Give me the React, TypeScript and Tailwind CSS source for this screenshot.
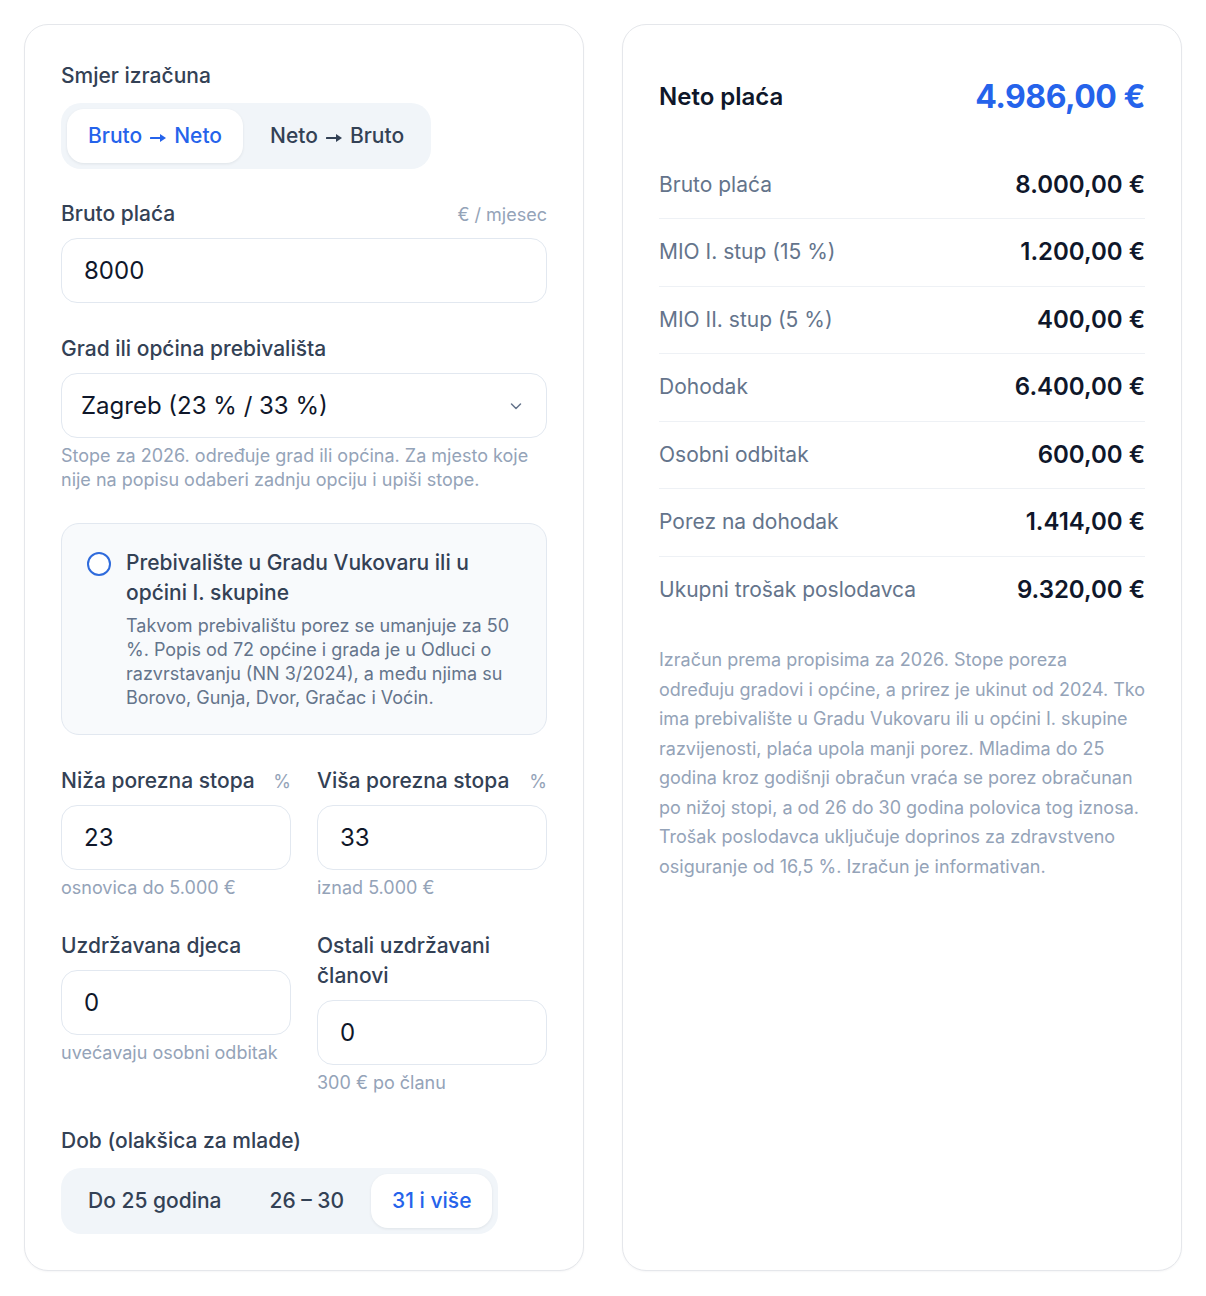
import React from "react";

const Arrow = () => (
  <svg className="mx-[8px] inline-block align-middle" width="16" height="10" viewBox="0 0 16 10" fill="currentColor">
    <rect x="0" y="4.1" width="11" height="1.8" rx="0.5" />
    <path d="M10 1l6 4-6 4z" />
  </svg>
);

const Segmented = ({ options, active }: { options: React.ReactNode[]; active: number }) => {
  return (
    <div className="inline-flex gap-[6px] self-start rounded-[20px] bg-[#f1f5f9] p-[6px]">
      {options.map((o, i) => (
        <button
          key={i}
          className={
            i === active
              ? "h-[54px] rounded-[17px] bg-white px-[21px] text-[21px] font-medium text-[#2563eb] shadow-[0_1px_3px_rgba(15,23,42,0.08)]"
              : "h-[54px] rounded-[17px] px-[21px] text-[21px] font-medium text-[#334155]"
          }
        >
          {o}
        </button>
      ))}
    </div>
  );
};

const Field = ({
  label,
  unit,
  value,
  hint,
}: {
  label: string;
  unit?: string;
  value: string;
  hint?: string;
}) => {
  return (
    <div className="flex flex-col">
      <div className="mb-[9px] flex items-baseline justify-between gap-3">
        <span className="text-[21px] font-medium leading-[30px] text-[#334155]">{label}</span>
        {unit && <span className="text-[18px] text-[#94a3b8]">{unit}</span>}
      </div>
      <input
        className="h-[65px] w-full rounded-[16px] border border-[#e2e8f0] bg-white px-[22px] text-[24px] text-[#0f172a] outline-none"
        defaultValue={value}
      />
      {hint && <p className="mt-[6px] text-[18px] leading-[24px] text-[#94a3b8]">{hint}</p>}
    </div>
  );
};

const rows = [
  ["Bruto plaća", "8.000,00 €"],
  ["MIO I. stup (15 %)", "1.200,00 €"],
  ["MIO II. stup (5 %)", "400,00 €"],
  ["Dohodak", "6.400,00 €"],
  ["Osobni odbitak", "600,00 €"],
  ["Porez na dohodak", "1.414,00 €"],
  ["Ukupni trošak poslodavca", "9.320,00 €"],
];

export default function App() {
  return (
    <div className="min-h-screen bg-white p-6 font-['Inter',sans-serif]">
      <div className="grid grid-cols-2 gap-[38px]">
        {/* left: inputs */}
        <div className="flex flex-col gap-[31px] rounded-[24px] border border-[#e5e7eb] bg-white p-9 shadow-[0_1px_2px_rgba(15,23,42,0.04)]">
          <div className="-mb-px flex flex-col">
            <span className="mb-3 text-[21px] font-medium leading-[30px] text-[#334155]">Smjer izračuna</span>
            <Segmented
              options={[
                <>
                  Bruto<Arrow />Neto
                </>,
                <>
                  Neto<Arrow />Bruto
                </>,
              ]}
              active={0}
            />
          </div>

          <Field label="Bruto plaća" unit="€ / mjesec" value="8000" />

          <div className="flex flex-col">
            <span className="mb-[9px] text-[21px] font-medium leading-[30px] text-[#334155]">
              Grad ili općina prebivališta
            </span>
            <div className="relative">
              <select className="h-[65px] w-full appearance-none rounded-[16px] border border-[#e2e8f0] bg-white pl-[19px] pr-12 text-[24px] text-[#0f172a] outline-none">
                <option>Zagreb (23 % / 33 %)</option>
              </select>
              <svg
                className="pointer-events-none absolute right-[24px] top-1/2 -translate-y-1/2"
                width="14"
                height="14"
                viewBox="0 0 14 14"
                fill="none"
                stroke="#64748b"
                strokeWidth="1.5"
                strokeLinecap="round"
                strokeLinejoin="round"
              >
                <path d="M2.5 5l4.5 4.5 4.5-4.5" />
              </svg>
            </div>
            <p className="mt-[6px] text-[18px] leading-[24px] text-[#94a3b8]">
              Stope za 2026. određuje grad ili općina. Za mjesto koje nije na popisu odaberi zadnju opciju i upiši stope.
            </p>
          </div>

          <label className="flex gap-[15px] rounded-[18px] border border-[#e2e8f0] bg-[#f8fafc] py-6 pl-[25px] pr-6">
            <span className="mt-[4px] h-6 w-6 shrink-0 rounded-full border-2 border-[#2f6bdc] bg-white" />
            <span className="flex flex-col">
              <span className="text-[21px] font-medium leading-[30px] text-[#334155]">
                Prebivalište u Gradu Vukovaru ili u općini I. skupine
              </span>
              <span className="mt-[6px] text-[18px] leading-[24px] text-[#64748b]">
                Takvom prebivalištu porez se umanjuje za 50 %. Popis od 72 općine i grada je u Odluci o razvrstavanju (NN
                3/2024), a među njima su Borovo, Gunja, Dvor, Gračac i Voćin.
              </span>
            </span>
          </label>

          <div className="grid grid-cols-2 items-start gap-x-[26px] gap-y-[31px]">
            <Field label="Niža porezna stopa" unit="%" value="23" hint="osnovica do 5.000 €" />
            <Field label="Viša porezna stopa" unit="%" value="33" hint="iznad 5.000 €" />
            <Field label="Uzdržavana djeca" value="0" hint="uvećavaju osobni odbitak" />
            <Field label="Ostali uzdržavani članovi" value="0" hint="300 € po članu" />
          </div>

          <div className="flex flex-col">
            <span className="mb-3 text-[21px] font-medium leading-[30px] text-[#334155]">Dob (olakšica za mlade)</span>
            <Segmented options={["Do 25 godina", "26 – 30", "31 i više"]} active={2} />
          </div>
        </div>

        {/* right: result */}
        <div className="flex flex-col rounded-[24px] border border-[#e5e7eb] bg-white p-9 shadow-[0_1px_2px_rgba(15,23,42,0.04)]">
          <div className="flex items-center justify-between py-4">
            <span className="text-[24px] font-semibold text-[#0f172a]">Neto plaća</span>
            <span className="text-[32px] font-bold leading-[40px] tracking-[-0.015em] text-[#2563eb]">4.986,00 €</span>
          </div>
          <div className="mt-[18.5px] flex flex-col">
            {rows.map(([k, v], i) => (
              <div
                key={k}
                className={
                  "flex items-center justify-between py-[18px] " +
                  (i < rows.length - 1 ? "border-b border-[#eef1f5]" : "")
                }
              >
                <span className="text-[21px] leading-[30.5px] text-[#64748b]">{k}</span>
                <span className="text-[24px] font-semibold leading-[30.5px] text-[#0f172a]">{v}</span>
              </div>
            ))}
          </div>
          <p className="-mr-[2px] mt-[22px] text-[18px] leading-[29.5px] text-[#94a3b8]">
            Izračun prema propisima za 2026. Stope poreza određuju gradovi i općine, a prirez je ukinut od 2024. Tko ima
            prebivalište u Gradu Vukovaru ili u općini I. skupine razvijenosti, plaća upola manji porez. Mladima do 25
            godina kroz godišnji obračun vraća se porez obračunan po nižoj stopi, a od 26 do 30 godina polovica tog
            iznosa. Trošak poslodavca uključuje doprinos za zdravstveno osiguranje od 16,5 %. Izračun je informativan.
          </p>
        </div>
      </div>
    </div>
  );
}
